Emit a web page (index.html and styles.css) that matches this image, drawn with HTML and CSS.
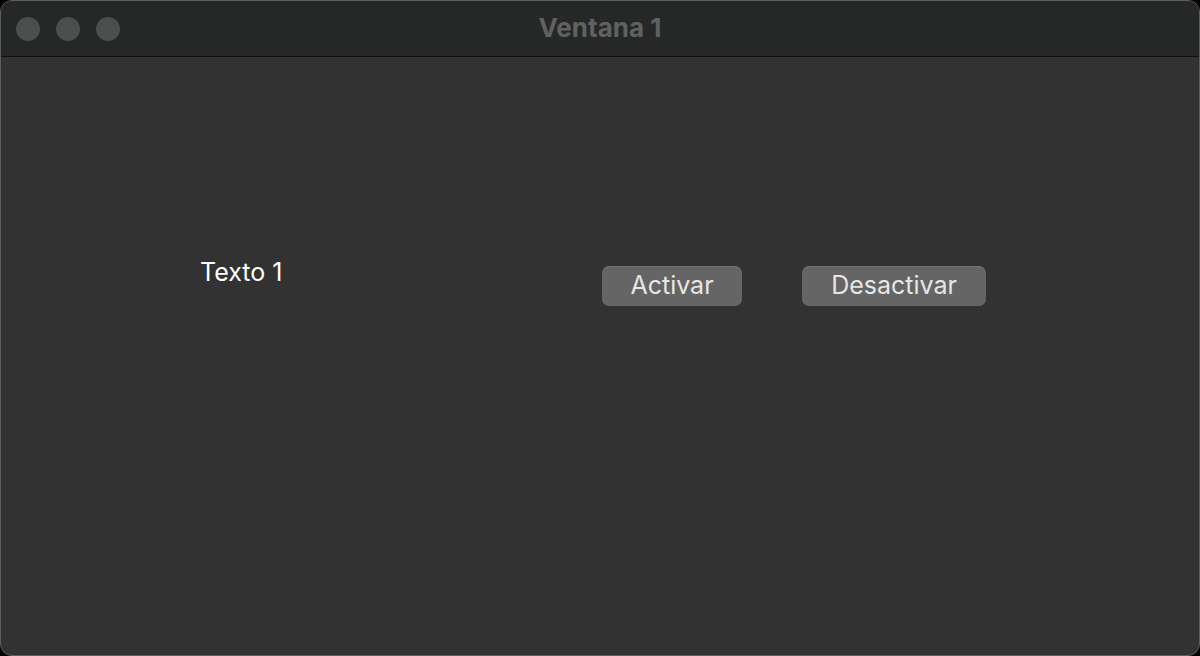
FILE: index.html
```html
<!DOCTYPE html>
<html lang="es">
<head>
<meta charset="utf-8">
<title>Ventana 1</title>
<link rel="stylesheet" href="styles.css">
</head>
<body>
<div class="window">
  <header class="titlebar">
    <div class="lights">
      <span class="light"></span>
      <span class="light"></span>
      <span class="light"></span>
    </div>
    <div class="title">Ventana 1</div>
  </header>
  <main class="content">
    <div class="label-col"><span class="label">Texto 1</span></div>
    <div class="buttons">
      <button class="btn btn-act">Activar</button>
      <button class="btn btn-deact">Desactivar</button>
    </div>
  </main>
</div>
</body>
</html>
```
FILE: styles.css
```css
html, body {
  margin: 0;
  padding: 0;
  background: #000;
  width: 1200px;
  height: 656px;
  overflow: hidden;
  font-family: Inter, "Liberation Sans", sans-serif;
}
.window {
  box-sizing: border-box;
  width: 1200px;
  height: 656px;
  border: 1px solid #5e5e5e;
  border-radius: 12px;
  background: #323232;
  overflow: hidden;
  display: flex;
  flex-direction: column;
}
.titlebar {
  height: 55px;
  flex: none;
  background: #262827;
  border-bottom: 1px solid #0e0e0e;
  position: relative;
  display: flex;
  align-items: center;
}
.lights {
  display: flex;
  gap: 16px;
  padding-left: 15px;
}
.light {
  width: 24px;
  height: 24px;
  border-radius: 50%;
  background: #4c4e4d;
}
.title {
  position: absolute;
  left: 0;
  right: 0;
  top: 0;
  height: 53px;
  line-height: 53px;
  text-align: center;
  color: #606261;
  font-weight: 700;
  font-size: 26px;
}
.content {
  flex: 1;
  display: flex;
  align-items: flex-start;
  padding-top: 200px;
}
.label-col {
  width: 601px;
  padding-left: 199px;
  box-sizing: border-box;
}
.label {
  display: block;
  color: #ffffff;
  font-size: 25px;
  line-height: 30px;
}
.buttons {
  display: flex;
  gap: 60px;
  padding-top: 9px;
}
.btn {
  height: 40px;
  border: none;
  border-radius: 7px;
  background: #656565;
  color: #e6e6e6;
  font-family: Inter, "Liberation Sans", sans-serif;
  font-size: 25px;
  line-height: 38px;
  padding: 0 0 2px;
  box-shadow: inset 0 1px 0 rgba(255,255,255,0.08);
}
.btn-act { width: 140px; }
.btn-deact { width: 184px; }
```
